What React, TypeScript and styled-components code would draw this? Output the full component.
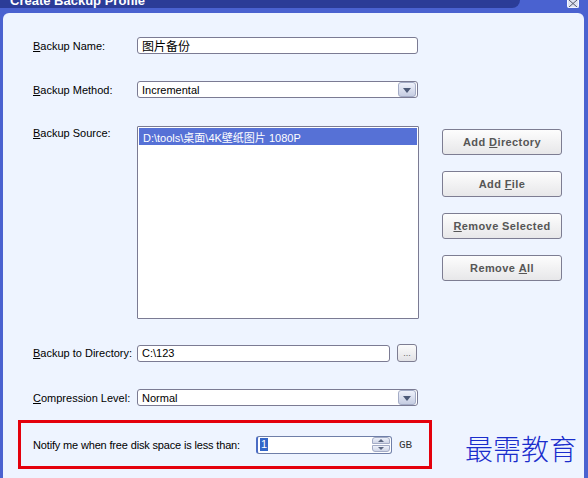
import React from "react";
import styled, { createGlobalStyle } from "styled-components";

const GlobalStyle = createGlobalStyle`
  html, body {
    margin: 0;
    padding: 0;
    overflow: hidden;
    background: #4a62d0;
  }
  * {
    box-sizing: border-box;
  }
`;

const Window = styled.div`
  width: 588px;
  height: 478px;
  display: flex;
  flex-direction: column;
  background: #4a62d0;
  font-family: "Liberation Sans", "Noto Sans CJK SC", sans-serif;
  font-size: 11px;
  color: #000;
  overflow: hidden;
`;

const TitleBar = styled.div`
  height: 13px;
  flex-shrink: 0;
  display: flex;
  align-items: flex-start;
`;

const TitleStrip = styled.div`
  width: 520px;
  height: 8px;
  padding-left: 10px;
  background: #2b3c97;
  border-bottom-right-radius: 8px;
  overflow: hidden;
`;

const TitleText = styled.div`
  margin-top: -6px;
  font: bold 13px/13px "Liberation Sans", sans-serif;
  color: #fff;
  white-space: nowrap;
`;

const CloseButton = styled.div`
  margin-left: auto;
  margin-right: 9px;
  width: 12px;
  height: 8px;
  display: flex;
  align-items: center;
  justify-content: center;
  background: #dfe3f2;
  border: 1px solid #f4f6ff;
  border-top: none;
  border-radius: 0 0 2px 2px;
`;

const Frame = styled.div`
  flex: 1;
  display: flex;
  padding: 0 4px 0 3px;
`;

const Panel = styled.div`
  flex: 1;
  display: flex;
  flex-direction: column;
  padding: 24px 0 0 15px;
  background: #eef4ff;
  border-radius: 6px 6px 0 0;
`;

const Row = styled.div<{ $top: number; $align?: string }>`
  display: flex;
  align-items: ${({ $align }) => $align || "center"};
  margin-top: ${({ $top }) => $top}px;
  padding-left: 15px;
`;

const Label = styled.div<{ $pad?: number }>`
  width: 104px;
  flex-shrink: 0;
  padding-top: ${({ $pad }) => $pad || 0}px;
  white-space: nowrap;
`;

const TextBox = styled.div<{ $w: number }>`
  width: ${({ $w }) => $w}px;
  height: 17px;
  display: flex;
  align-items: center;
  padding-left: 4px;
  background: #fff;
  border: 1px solid #7b7b93;
  border-radius: 3px;
  white-space: nowrap;
`;

const CjkText = styled.span`
  font-size: 12px;
`;

const Combo = styled(TextBox)`
  padding-right: 1px;
`;

const DropButton = styled.div`
  margin-left: auto;
  width: 18px;
  height: 15px;
  display: flex;
  align-items: center;
  justify-content: center;
  background: linear-gradient(#eef1fb, #c6cde2);
  border: 1px solid #a4acc6;
  border-radius: 3px;

  &::after {
    content: "";
    border-left: 4px solid transparent;
    border-right: 4px solid transparent;
    border-top: 5px solid #4d5a78;
    margin-top: 1px;
  }
`;

const ListBox = styled.div`
  width: 282px;
  height: 193px;
  padding: 1px;
  background: #fff;
  border: 1px solid #7b7b93;
  border-radius: 1px;
`;

const ListItem = styled.div<{ $selected?: boolean }>`
  height: 17px;
  display: flex;
  align-items: center;
  padding-left: 4px;
  white-space: nowrap;
  background: ${({ $selected }) => ($selected ? "#5671d6" : "transparent")};
  color: ${({ $selected }) => ($selected ? "#fff" : "#000")};
`;

const ButtonColumn = styled.div`
  display: flex;
  flex-direction: column;
  gap: 16px;
  margin-left: 23px;
  padding-top: 3px;
`;

const ActionButton = styled.div`
  width: 120px;
  height: 26px;
  display: flex;
  align-items: center;
  justify-content: center;
  font-weight: bold;
  letter-spacing: 0.4px;
  color: #565656;
  background: linear-gradient(#fdfdfd, #e7e7e9);
  border: 1px solid #7d7d92;
  border-radius: 3px;
`;

const BrowseButton = styled.div`
  width: 20px;
  height: 18px;
  margin-left: 7px;
  display: flex;
  align-items: center;
  justify-content: center;
  font-size: 9px;
  line-height: 1;
  color: #666;
  background: linear-gradient(#fbfbfb, #e2e2e6);
  border: 1px solid #7d7d92;
  border-radius: 3px;
`;

const BottomRow = styled.div`
  display: flex;
  align-items: center;
  margin-top: 14px;
`;

const NotifyBox = styled.div`
  width: 414px;
  height: 49px;
  display: flex;
  align-items: center;
  padding-left: 12px;
  border: 3px solid #e4000c;
`;

const NotifyLabel = styled.div`
  width: 223px;
  flex-shrink: 0;
  letter-spacing: -0.16px;
  white-space: nowrap;
`;

const SpinBox = styled.div`
  width: 136px;
  height: 18px;
  display: flex;
  align-items: center;
  padding: 0 1px 0 2px;
  background: #fff;
  border: 1px solid #6f7fa8;
  border-left: 2px solid #4a6cc4;
  border-radius: 3px;
`;

const SelectedText = styled.span`
  padding: 0 1px;
  background: #3466c8;
  color: #fff;
  line-height: 13px;
`;

const SpinButtons = styled.div`
  margin-left: auto;
  width: 18px;
  height: 15px;
  display: flex;
  flex-direction: column;
  gap: 1px;
`;

const SpinArrow = styled.div<{ $dir: "up" | "down" }>`
  flex: 1;
  display: flex;
  align-items: center;
  justify-content: center;
  background: linear-gradient(#eef1fb, #cfd5e6);
  border: 1px solid #a4acc6;
  border-radius: ${({ $dir }) => ($dir === "up" ? "3px 3px 0 0" : "0 0 3px 3px")};

  &::after {
    content: "";
    border-left: 3px solid transparent;
    border-right: 3px solid transparent;
    ${({ $dir }) =>
      $dir === "up"
        ? "border-bottom: 3px solid #5b6680;"
        : "border-top: 3px solid #5b6680;"}
  }
`;

const Unit = styled.div`
  margin-left: 7px;
  font-family: "Liberation Mono", monospace;
  font-size: 11px;
  color: #333;
`;

const Watermark = styled.div`
  margin-left: 33px;
  margin-top: 6px;
  font-family: "Noto Sans CJK SC", sans-serif;
  font-size: 28px;
  font-weight: 300;
  line-height: 1;
  color: #1a2dcc;
  white-space: nowrap;
`;

const App: React.FC = () => {
  return (
    <>
      <GlobalStyle />
      <Window>
        <TitleBar>
          <TitleStrip>
            <TitleText>Create Backup Profile</TitleText>
          </TitleStrip>
          <CloseButton>
            <svg width="10" height="7" viewBox="0 0 10 7">
              <path d="M1 0 L9 7 M9 0 L1 7" stroke="#55596a" strokeWidth="1" />
            </svg>
          </CloseButton>
        </TitleBar>
        <Frame>
          <Panel>
            <Row $top={0}>
              <Label>
                <u>B</u>ackup Name:
              </Label>
              <TextBox $w={281}>
                <CjkText>图片备份</CjkText>
              </TextBox>
            </Row>

            <Row $top={27}>
              <Label>
                <u>B</u>ackup Method:
              </Label>
              <Combo $w={281}>
                Incremental
                <DropButton />
              </Combo>
            </Row>

            <Row $top={28} $align="flex-start">
              <Label $pad={1}>
                <u>B</u>ackup Source:
              </Label>
              <ListBox>
                <ListItem $selected>D:\tools\桌面\4K壁纸图片 1080P</ListItem>
              </ListBox>
              <ButtonColumn>
                <ActionButton>
                  Add&nbsp;<u>D</u>irectory
                </ActionButton>
                <ActionButton>
                  Add&nbsp;<u>F</u>ile
                </ActionButton>
                <ActionButton>
                  <u>R</u>emove Selected
                </ActionButton>
                <ActionButton>
                  Remove&nbsp;<u>A</u>ll
                </ActionButton>
              </ButtonColumn>
            </Row>

            <Row $top={25}>
              <Label>
                <u>B</u>ackup to Directory:
              </Label>
              <TextBox $w={253}>C:\123</TextBox>
              <BrowseButton>...</BrowseButton>
            </Row>

            <Row $top={27}>
              <Label>
                <u>C</u>ompression Level:
              </Label>
              <Combo $w={281}>
                Normal
                <DropButton />
              </Combo>
            </Row>

            <BottomRow>
              <NotifyBox>
                <NotifyLabel>Notify me when free disk space is less than:</NotifyLabel>
                <SpinBox>
                  <SelectedText>1</SelectedText>
                  <SpinButtons>
                    <SpinArrow $dir="up" />
                    <SpinArrow $dir="down" />
                  </SpinButtons>
                </SpinBox>
                <Unit>GB</Unit>
              </NotifyBox>
              <Watermark>最需教育</Watermark>
            </BottomRow>
          </Panel>
        </Frame>
      </Window>
    </>
  );
};

export default App;
